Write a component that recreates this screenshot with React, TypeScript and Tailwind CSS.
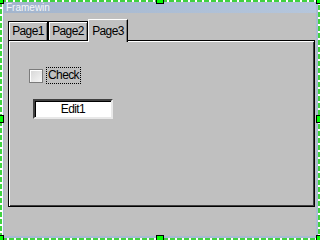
const handles = [
  'left-[-4px] top-[-4px]',
  'left-[156px] top-[-4px]',
  'left-[316px] top-[-4px]',
  'left-[-4px] top-[115px]',
  'left-[316px] top-[115px]',
  'left-[-4px] top-[235px]',
  'left-[156px] top-[235px]',
  'left-[316px] top-[235px]',
];

const Tab = ({ label, active }: { label: string; active?: boolean }) =>
  active ? (
    <div className="relative -mb-[2px] flex h-[23px] w-[40px] items-start justify-center border-l border-t border-r border-l-white border-t-white border-r-black bg-[#c0c0c0] pt-[4px] shadow-[inset_-1px_0_0_#808080]">
      {label}
    </div>
  ) : (
    <div className="flex h-[19px] w-[40px] items-start justify-center border-l border-t border-r border-[#000] bg-[#c0c0c0] pt-[2px] shadow-[inset_1px_1px_0_#fff,inset_-1px_0_0_#808080]">
      {label}
    </div>
  );

export default function App() {
  return (
    <div className="relative h-[240px] w-[320px] overflow-hidden bg-white font-['Liberation_Sans',Arial,sans-serif] text-[12px] leading-[14px] tracking-[-0.6px] text-black">
      <div className="flex h-full flex-col p-[2px]">
        <div className="flex flex-1 flex-col bg-[#a9bbd3] px-[2px] pb-[2px] shadow-[inset_1px_0_0_#fff]">
          <div className="h-[11px] bg-gradient-to-r from-[#a3b5cd] to-[#b5c6dc] pl-[2px] text-[10px] leading-[11px] tracking-normal text-[#f4f6fa]">
            Framewin
          </div>
          <div className="flex flex-1 flex-col bg-[#c0c0c0] pt-[6px] pr-[1px] pl-[4px]">
            <div className="flex items-end">
              <Tab label="Page1" />
              <Tab label="Page2" />
              <Tab label="Page3" active />
            </div>
            <div className="h-[167px] border border-black bg-[#c0c0c0] shadow-[inset_1px_1px_0_#fff,inset_-1px_-1px_0_#404040]">
              <div className="flex flex-col pt-[26px] pl-[20px]">
                <div className="flex items-center gap-[3px]">
                  <div className="h-[14px] w-[14px] border border-[#7b7b7b] bg-gradient-to-br from-[#d6d6d6] to-[#f6f6f6] shadow-[inset_1px_1px_0_#fff]" />
                  <div className="border border-dotted border-black px-[1px] pb-[1px]">
                    Check
                  </div>
                </div>
                <div className="mt-[15px] ml-[4px] flex h-[20px] w-[80px] items-center justify-center border-2 border-t-[#404040] border-l-[#404040] border-r-[#e8e8e8] border-b-[#e8e8e8] bg-white shadow-[inset_1px_1px_0_#000]">
                  Edit1
                </div>
              </div>
            </div>
          </div>
        </div>
      </div>
      <svg className="absolute inset-0" width="320" height="240">
        <rect x="1" y="1" width="318" height="238" fill="none" stroke="#3fd23f" strokeWidth="2" strokeDasharray="5 2" />
      </svg>
      {handles.map((h) => (
        <div key={h} className={`absolute h-[8px] w-[8px] border border-black bg-[#00ff00] ${h}`} />
      ))}
    </div>
  );
}
